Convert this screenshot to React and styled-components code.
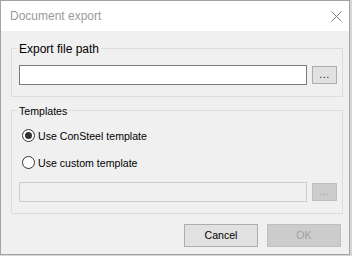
import React from 'react';
import styled, { createGlobalStyle } from 'styled-components';

const GlobalStyle = createGlobalStyle`
  html, body { margin: 0; padding: 0; background: #d6d6d6; }
  body { font-family: "Liberation Sans", Arial, sans-serif; font-size: 12px; color: #000; }
  * { box-sizing: border-box; }
`;

const Window = styled.div`
  width: 350px;
  height: 255px;
  border: 1px solid #a3a3a3;
  background: #f0f0f0;
  display: flex;
  flex-direction: column;
`;

const TitleBar = styled.div`
  height: 30px;
  flex-shrink: 0;
  background: #fff;
  display: flex;
  align-items: center;
  justify-content: space-between;
  padding: 0 7px 0 9px;
`;

const Title = styled.span`
  line-height: 15px;
  color: #9a9a9a;
`;

const Content = styled.div`
  display: flex;
  flex-direction: column;
  padding: 17px 6px 0 10px;
`;

const Group = styled.div`
  border: 1px solid #dcdcdc;
  display: flex;
  flex-direction: column;
  padding: 0 5px 11px 7px;
  margin-top: ${(p) => p.$top}px;
`;

const Legend = styled.span`
  align-self: flex-start;
  margin: -7px 0 0 -2px;
  padding: 0 2px;
  line-height: 15px;
  font-size: ${(p) => p.$size || 12}px;
  background: #f0f0f0;
`;

const FieldRow = styled.div`
  display: flex;
  align-items: flex-start;
  gap: 5px;
  margin-top: ${(p) => p.$top}px;
`;

const TextBox = styled.div`
  flex: 1;
  height: 20px;
  border: 1px solid ${(p) => (p.$disabled ? '#cccccc' : '#7a7a7a')};
  background: ${(p) => (p.$disabled ? '#f0f0f0' : '#fff')};
`;

const BrowseButton = styled.div`
  width: 25px;
  height: 18px;
  margin-top: 1px;
  border: 1px solid ${(p) => (p.$disabled ? '#bfbfbf' : '#adadad')};
  background: ${(p) => (p.$disabled ? '#cccccc' : '#e1e1e1')};
  color: ${(p) => (p.$disabled ? '#a0a0a0' : '#222')};
  display: flex;
  align-items: center;
  justify-content: center;
  font-size: 11px;
  line-height: 11px;
  letter-spacing: 0.5px;
  padding-bottom: 1px;
`;

const RadioRow = styled.div`
  display: flex;
  align-items: center;
  gap: 3px;
  height: 17px;
  padding-left: 3px;
  margin-top: ${(p) => p.$top}px;
`;

const RadioCircle = styled.span`
  width: 13px;
  height: 13px;
  border-radius: 50%;
  border: 1px solid #333;
  background: #fff;
  display: flex;
  align-items: center;
  justify-content: center;
  flex-shrink: 0;
  &::after {
    content: '';
    width: 7px;
    height: 7px;
    border-radius: 50%;
    background: ${(p) => (p.$checked ? '#333' : 'transparent')};
  }
`;

const RadioLabel = styled.span`
  line-height: 15px;
  font-size: 10.6px;
  padding-top: 1px;
`;

const ButtonRow = styled.div`
  display: flex;
  justify-content: flex-end;
  gap: 9px;
  margin: 10px 2px 0 0;
`;

const DialogButton = styled.div`
  width: 74px;
  height: 23px;
  border: 1px solid ${(p) => (p.$disabled ? '#bfbfbf' : '#adadad')};
  background: ${(p) => (p.$disabled ? '#cccccc' : '#e1e1e1')};
  color: ${(p) => (p.$disabled ? '#a0a0a0' : '#000')};
  display: flex;
  align-items: center;
  justify-content: center;
  font-size: 10.6px;
  line-height: 15px;
`;

const CloseIcon = () => (
  <svg width="11" height="11" viewBox="0 0 11 11">
    <path d="M0.5 0.5 L10.5 10.5 M10.5 0.5 L0.5 10.5" stroke="#7a7a7a" strokeWidth="1" fill="none" />
  </svg>
);

const Radio = ({ checked, label, top }) => (
  <RadioRow $top={top}>
    <RadioCircle $checked={checked} />
    <RadioLabel>{label}</RadioLabel>
  </RadioRow>
);

export default function App() {
  return (
    <>
      <GlobalStyle />
      <Window>
        <TitleBar>
          <Title>Document export</Title>
          <CloseIcon />
        </TitleBar>
        <Content>
          <Group $top={0}>
            <Legend>Export file path</Legend>
            <FieldRow $top={8}>
              <TextBox />
              <BrowseButton>...</BrowseButton>
            </FieldRow>
          </Group>
          <Group $top={13}>
            <Legend $size={10.6}>Templates</Legend>
            <Radio checked label="Use ConSteel template" top={8} />
            <Radio label="Use custom template" top={10} />
            <FieldRow $top={11}>
              <TextBox $disabled />
              <BrowseButton $disabled>...</BrowseButton>
            </FieldRow>
          </Group>
          <ButtonRow>
            <DialogButton>Cancel</DialogButton>
            <DialogButton $disabled>OK</DialogButton>
          </ButtonRow>
        </Content>
      </Window>
    </>
  );
}
